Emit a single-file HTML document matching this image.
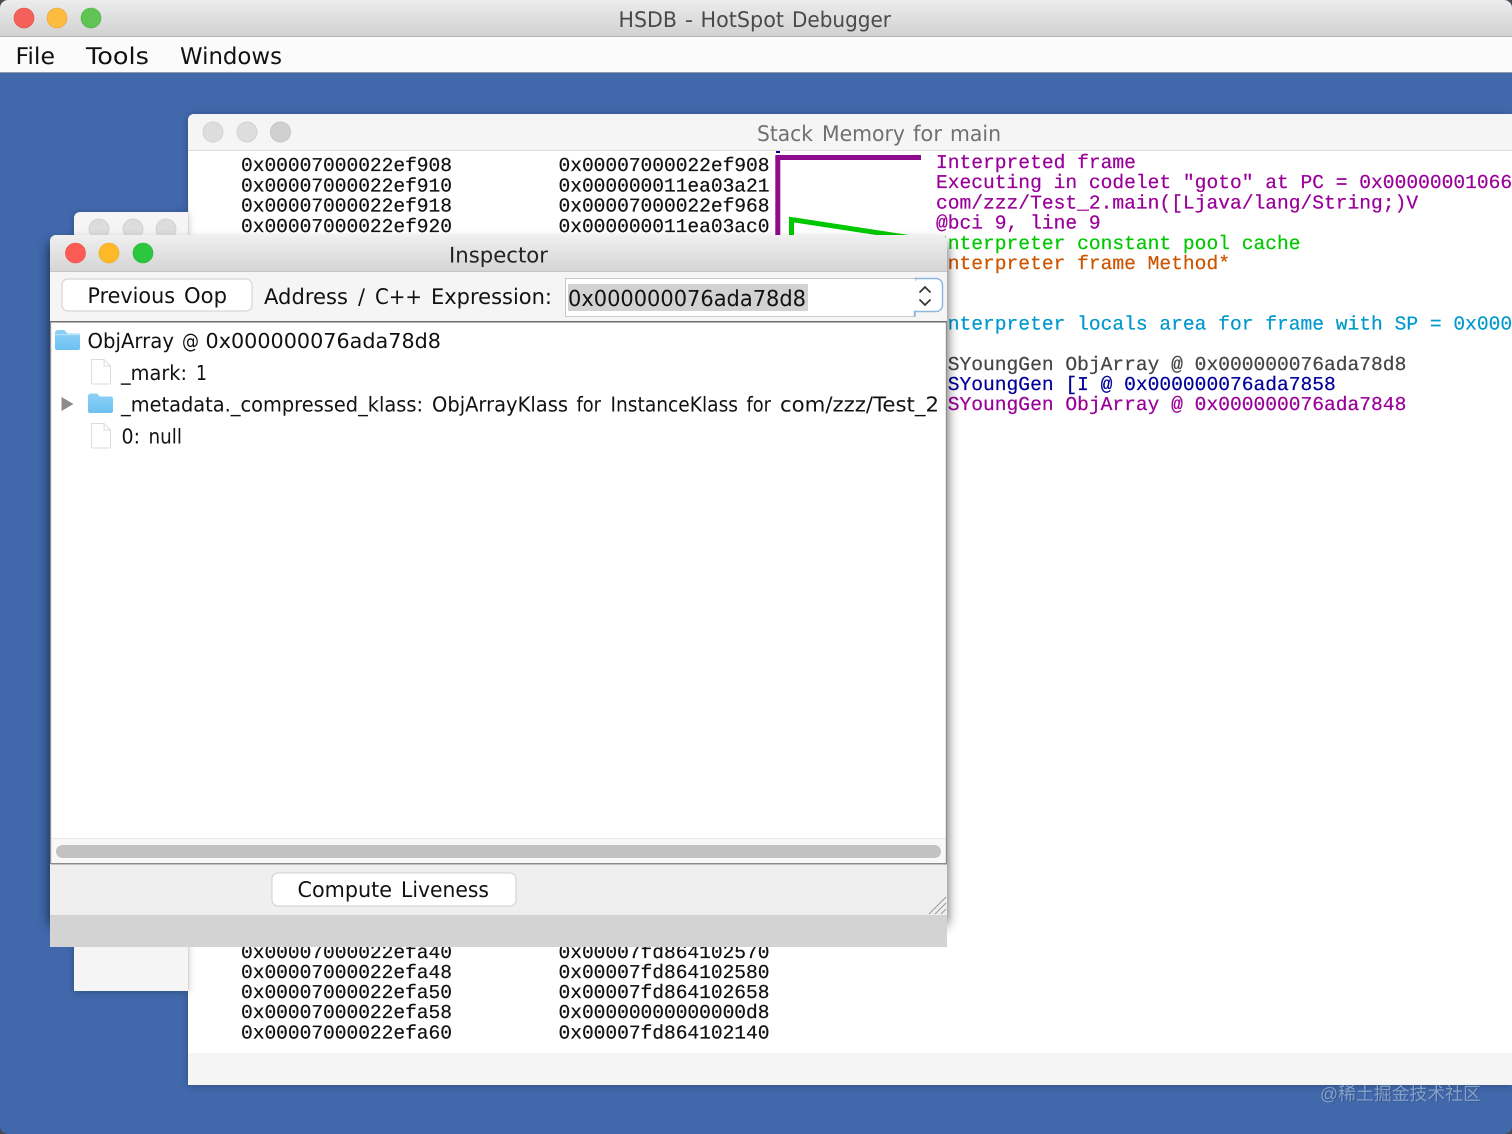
<!DOCTYPE html>
<html><head><meta charset="utf-8"><title>HSDB - HotSpot Debugger</title>
<style>
html,body{margin:0;padding:0;background:#fff}
body{width:1512px;height:1134px;overflow:hidden}
svg{display:block}
.u{font-family:"DejaVu Sans","Liberation Sans",sans-serif;fill:#111}
.m{font-family:"Liberation Mono",monospace;font-size:19.6px;fill:#111;stroke:#111;stroke-width:.22px}
.m2{font-family:"Liberation Mono",monospace;font-size:19.6px;stroke-width:.22px}
</style></head><body>
<svg xmlns="http://www.w3.org/2000/svg" width="1512" height="1134" viewBox="0 0 1512 1134" text-rendering="geometricPrecision">
<defs>
<linearGradient id="t1" x1="0" y1="0" x2="0" y2="1"><stop offset="0" stop-color="#ececec"/><stop offset="1" stop-color="#d1d1d1"/></linearGradient>
<linearGradient id="t2" x1="0" y1="0" x2="0" y2="1"><stop offset="0" stop-color="#f0f0f0"/><stop offset="1" stop-color="#d4d4d4"/></linearGradient>
<linearGradient id="fd" x1="0" y1="0" x2="0" y2="1"><stop offset="0" stop-color="#8ed2f6"/><stop offset="1" stop-color="#6cc0f0"/></linearGradient>
<filter id="blur" x="-10%" y="-10%" width="120%" height="120%"><feGaussianBlur stdDeviation="6"/></filter>
<filter id="sh2" x="-10%" y="-10%" width="120%" height="120%"><feDropShadow dx="0" dy="1" stdDeviation="4" flood-color="#000" flood-opacity=".25"/></filter>
<clipPath id="stackclip"><rect x="188" y="151" width="1324" height="902"/></clipPath>
</defs>

<!-- main window -->
<rect x="0" y="0" width="1512" height="1134" fill="#4a4a4a"/>
<rect x="0" y="0" width="1512" height="1134" rx="8" fill="#4068ab"/>
<path d="M0 37V8a8 8 0 0 1 8-8H1504a8 8 0 0 1 8 8V37Z" fill="url(#t1)"/>
<rect x="0" y="36" width="1512" height="1" fill="#b4b4b4"/>
<rect x="0" y="37" width="1512" height="35" fill="#fbfbfb"/>
<rect x="0" y="72" width="1512" height="1" fill="#8f9aac"/>
<circle cx="24" cy="18" r="10" fill="#f4605a" stroke="#e0483f" stroke-width=".6"/>
<circle cx="57" cy="18" r="10" fill="#fdbb40" stroke="#e3a232" stroke-width=".6"/>
<circle cx="91" cy="18" r="10" fill="#5fc454" stroke="#4eae44" stroke-width=".6"/>
<g class="u" font-size="21.5" style="fill:#4a4a4a">
<text x="618.500" y="27" textLength="58.500" lengthAdjust="spacingAndGlyphs">HSDB</text>
<text x="685" y="27" textLength="8" lengthAdjust="spacingAndGlyphs">-</text>
<text x="700.500" y="27" textLength="83.500" lengthAdjust="spacingAndGlyphs">HotSpot</text>
<text x="792" y="27" textLength="99" lengthAdjust="spacingAndGlyphs">Debugger</text>
</g>
<text class="u" x="15.500" y="64" font-size="23" textLength="39.500" lengthAdjust="spacingAndGlyphs">File</text>
<text class="u" x="86" y="64" font-size="23" textLength="63" lengthAdjust="spacingAndGlyphs">Tools</text>
<text class="u" x="180" y="64" font-size="23" textLength="102" lengthAdjust="spacingAndGlyphs">Windows</text>

<!-- stack memory window -->
<g filter="url(#sh2)">
<path d="M188 1085V120a6 6 0 0 1 6-6H1512V1085Z" fill="#fff"/>
</g>
<path d="M188 150V120a6 6 0 0 1 6-6H1512V150Z" fill="#f5f5f5"/>
<rect x="188" y="150" width="1324" height="1" fill="#dcdcdc"/>
<rect x="188" y="1053" width="1324" height="32" fill="#f5f5f5"/>
<circle cx="213" cy="132" r="10" fill="#dddddd" stroke="#d2d2d2"/>
<circle cx="247" cy="132" r="10" fill="#dddddd" stroke="#d2d2d2"/>
<circle cx="280.500" cy="132" r="10" fill="#d0d0d0" stroke="#c4c4c4"/>
<g class="u" font-size="21.5" style="fill:#707070">
<text x="757" y="141" textLength="56" lengthAdjust="spacingAndGlyphs">Stack</text>
<text x="822" y="141" textLength="83" lengthAdjust="spacingAndGlyphs">Memory</text>
<text x="913" y="141" textLength="29" lengthAdjust="spacingAndGlyphs">for</text>
<text x="950" y="141" textLength="51" lengthAdjust="spacingAndGlyphs">main</text>
</g>

<g clip-path="url(#stackclip)">
<text class="m" x="241" y="171.200" textLength="211">0x00007000022ef908</text>
<text class="m" x="241" y="191.400" textLength="211">0x00007000022ef910</text>
<text class="m" x="241" y="211.600" textLength="211">0x00007000022ef918</text>
<text class="m" x="241" y="231.800" textLength="211">0x00007000022ef920</text>
<text class="m" x="558.500" y="171.200" textLength="211">0x00007000022ef908</text>
<text class="m" x="558.500" y="191.400" textLength="211">0x000000011ea03a21</text>
<text class="m" x="558.500" y="211.600" textLength="211">0x00007000022ef968</text>
<text class="m" x="558.500" y="231.800" textLength="211">0x000000011ea03ac0</text>

<text class="m" x="241" y="958" textLength="211">0x00007000022efa40</text>
<text class="m" x="241" y="978" textLength="211">0x00007000022efa48</text>
<text class="m" x="241" y="998.200" textLength="211">0x00007000022efa50</text>
<text class="m" x="241" y="1018.200" textLength="211">0x00007000022efa58</text>
<text class="m" x="241" y="1038.400" textLength="211">0x00007000022efa60</text>
<text class="m" x="558.500" y="958" textLength="211">0x00007fd864102570</text>
<text class="m" x="558.500" y="978" textLength="211">0x00007fd864102580</text>
<text class="m" x="558.500" y="998.200" textLength="211">0x00007fd864102658</text>
<text class="m" x="558.500" y="1018.200" textLength="211">0x00000000000000d8</text>
<text class="m" x="558.500" y="1038.400" textLength="211">0x00007fd864102140</text>

<rect x="776" y="151" width="4" height="2" fill="#000099"/>
<path d="M777.800 240V157.500H921" fill="none" stroke="#8e0b8e" stroke-width="5"/>
<path d="M791.500 240V219.500L925 240" fill="none" stroke="#00c800" stroke-width="5"/>

<text class="m2" x="936" y="168" style="fill:#990099;stroke:#990099">Interpreted frame</text>
<text class="m2" x="936" y="188.200" style="fill:#990099;stroke:#990099">Executing in codelet "goto" at PC = 0x00000001066</text>
<text class="m2" x="936" y="208.400" style="fill:#990099;stroke:#990099">com/zzz/Test_2.main([Ljava/lang/String;)V</text>
<text class="m2" x="936" y="228.600" style="fill:#990099;stroke:#990099">@bci 9, line 9</text>
<text class="m2" x="936" y="248.800" style="fill:#00c800;stroke:#00c800">Interpreter constant pool cache</text>
<text class="m2" x="936" y="268.800" style="fill:#cc5500;stroke:#cc5500">Interpreter frame Method*</text>
<text class="m2" x="936" y="329.400" style="fill:#0099cc;stroke:#0099cc">Interpreter locals area for frame with SP = 0x000</text>
<text class="m2" x="936" y="369.800" style="fill:#444444;stroke:#444444">PSYoungGen ObjArray @ 0x000000076ada78d8</text>
<text class="m2" x="936" y="390" style="fill:#000099;stroke:#000099">PSYoungGen [I @ 0x000000076ada7858</text>
<text class="m2" x="936" y="410" style="fill:#990099;stroke:#990099">PSYoungGen ObjArray @ 0x000000076ada7848</text>
</g>

<!-- back window -->
<g filter="url(#sh2)">
<path d="M74 991V218a6 6 0 0 1 6-6H188V991Z" fill="#f5f5f5"/>
</g>
<circle cx="99" cy="229" r="10" fill="#dcdcdc" stroke="#d2d2d2"/>
<circle cx="133" cy="229" r="10" fill="#dcdcdc" stroke="#d2d2d2"/>
<circle cx="166" cy="229" r="10" fill="#dcdcdc" stroke="#d2d2d2"/>
<rect x="188" y="200" width="1" height="791" fill="#000" opacity=".05"/>

<!-- inspector -->
<rect x="50" y="243" width="897" height="682" fill="#000" opacity=".68" filter="url(#blur)"/>
<path d="M50 947V241a6 6 0 0 1 6-6H941a6 6 0 0 1 6 6V947Z" fill="#f5f5f5"/>
<path d="M50 272V241a6 6 0 0 1 6-6H941a6 6 0 0 1 6 6V272Z" fill="url(#t2)"/>
<rect x="50" y="271" width="897" height="1" fill="#c4c4c4"/>
<circle cx="75.500" cy="253" r="10" fill="#fb5a55" stroke="#ea4a45" stroke-width=".6"/>
<circle cx="109" cy="253" r="10" fill="#fdb927" stroke="#e9a820" stroke-width=".6"/>
<circle cx="143" cy="253" r="10" fill="#2cc63f" stroke="#25b236" stroke-width=".6"/>
<text class="u" x="449" y="262.500" font-size="21.500" style="fill:#222" textLength="99" lengthAdjust="spacingAndGlyphs">Inspector</text>

<!-- toolbar -->
<rect x="50" y="272" width="897" height="49" fill="#f5f5f5"/>
<rect x="62" y="279" width="190" height="32" rx="6" fill="#fff" stroke="#cfcfcf"/>
<g class="u" font-size="21.5">
<text x="87.500" y="303" textLength="87.500" lengthAdjust="spacingAndGlyphs">Previous</text>
<text x="184" y="303" textLength="43" lengthAdjust="spacingAndGlyphs">Oop</text>
<text x="264" y="304" textLength="84" lengthAdjust="spacingAndGlyphs">Address</text>
<text x="358" y="304" textLength="7" lengthAdjust="spacingAndGlyphs">/</text>
<text x="375" y="304" textLength="47" lengthAdjust="spacingAndGlyphs">C++</text>
<text x="431" y="304" textLength="121" lengthAdjust="spacingAndGlyphs">Expression:</text>
</g>
<rect x="565.500" y="278.500" width="350" height="38" fill="#fff" stroke="#c8c8c8"/>
<rect x="568" y="284" width="240" height="27" fill="#d2d2d2"/>
<text class="u" x="568" y="306" font-size="22" textLength="238" lengthAdjust="spacingAndGlyphs">0x000000076ada78d8</text>
<rect x="914" y="279" width="29" height="33" rx="6" fill="#fff"/>
<path d="M914.500 278.500H936a6.500 6.500 0 0 1 6.500 6.500V305a6.500 6.500 0 0 1-6.500 6.500H914.500V316" fill="none" stroke="#8db8e4" stroke-width="1.500"/>
<path d="M919.500 292.500L925 287L930.500 292.500M919.500 299.500L925 305L930.500 299.500" fill="none" stroke="#333" stroke-width="1.700"/>
<rect x="50" y="321" width="897" height="1.500" fill="#6f6f6f"/>

<!-- tree -->
<rect x="51" y="322.500" width="895" height="516" fill="#fff"/>
<path d="M55 333a3 3 0 0 1 3-3H64.500L67.500 333.500H79a1.500 1.500 0 0 1 1 1.500V348a2 2 0 0 1-2 2H57a2 2 0 0 1-2-2Z" fill="url(#fd)"/>
<rect x="55" y="334" width="25" height="1.200" fill="#b7e2fa"/>
<g class="u" font-size="20.5">
<text x="87.500" y="348" textLength="86.500" lengthAdjust="spacingAndGlyphs">ObjArray</text>
<text x="182" y="348" textLength="17" lengthAdjust="spacingAndGlyphs">@</text>
<text x="205.500" y="348" textLength="235.500" lengthAdjust="spacingAndGlyphs">0x000000076ada78d8</text>
<text x="121" y="380" textLength="66" lengthAdjust="spacingAndGlyphs">_mark:</text>
<text x="196" y="380" textLength="11" lengthAdjust="spacingAndGlyphs">1</text>
<text x="121" y="411.500" textLength="302" lengthAdjust="spacingAndGlyphs">_metadata._compressed_klass:</text>
<text x="432" y="411.500" textLength="136" lengthAdjust="spacingAndGlyphs">ObjArrayKlass</text>
<text x="576.500" y="411.500" textLength="24.500" lengthAdjust="spacingAndGlyphs">for</text>
<text x="610.500" y="411.500" textLength="127.500" lengthAdjust="spacingAndGlyphs">InstanceKlass</text>
<text x="746.500" y="411.500" textLength="24.500" lengthAdjust="spacingAndGlyphs">for</text>
<text x="780" y="411.500" textLength="159" lengthAdjust="spacingAndGlyphs">com/zzz/Test_2</text>
<text x="121.500" y="443.500" textLength="18.500" lengthAdjust="spacingAndGlyphs">0:</text>
<text x="148.500" y="443.500" textLength="33.500" lengthAdjust="spacingAndGlyphs">null</text>
</g>

<path d="M91.500 359.500H104L110.500 366V383a1 1 0 0 1-1 1H92.500a1 1 0 0 1-1-1Z M104 359.500V366H110.500" fill="#fff" stroke="#dcdcdc"/>
<path d="M61.500 397V411L73.500 404Z" fill="#8c8c8c"/>
<path d="M88 396a2.500 2.500 0 0 1 2.500-2.500H97L100 396.500H111a2 2 0 0 1 2 2V411a2 2 0 0 1-2 2H90a2 2 0 0 1-2-2Z" fill="url(#fd)"/>
<path d="M91.500 423.500H104L110.500 430V447a1 1 0 0 1-1 1H92.500a1 1 0 0 1-1-1Z M104 423.500V430H110.500" fill="#fff" stroke="#dcdcdc"/>

<!-- scrollbar -->
<rect x="51" y="838" width="895" height="25" fill="#f8f8f8"/>
<rect x="51" y="838" width="895" height="1" fill="#e8e8e8"/>
<rect x="56" y="845" width="885" height="13" rx="6.500" fill="#c2c2c2"/>
<rect x="51" y="863" width="896" height="1.500" fill="#8a8a8a"/>
<rect x="50" y="322" width="1.200" height="542" fill="#8f8f8f"/>
<rect x="945.800" y="322" width="1.200" height="542" fill="#8f8f8f"/>

<!-- bottom -->
<rect x="50" y="865" width="897" height="50" fill="#efefef"/>
<rect x="272" y="873" width="244" height="33" rx="6" fill="#fff" stroke="#cdcdcd"/>
<g class="u" font-size="21.5">
<text x="297.500" y="897" textLength="94.500" lengthAdjust="spacingAndGlyphs">Compute</text>
<text x="401" y="897" textLength="88" lengthAdjust="spacingAndGlyphs">Liveness</text>
</g>
<path d="M929 914L946 897M935 914L946 903M941 914L946 909" stroke="#9a9a9a" stroke-width="1" fill="none"/>
<rect x="50" y="915" width="897" height="32" fill="#d3d3d3"/>

<!-- watermark -->
<text x="1321" y="1100.500" font-size="18" textLength="161" lengthAdjust="spacingAndGlyphs" style="font-family:'Liberation Sans','Noto Sans CJK SC',sans-serif;fill:#2c4a7d;opacity:.75">@稀土掘金技术社区</text>
<text x="1320" y="1100" font-size="18" textLength="161" lengthAdjust="spacingAndGlyphs" style="font-family:'Liberation Sans','Noto Sans CJK SC',sans-serif;fill:#86a0c8">@稀土掘金技术社区</text>
</svg>
</body></html>
